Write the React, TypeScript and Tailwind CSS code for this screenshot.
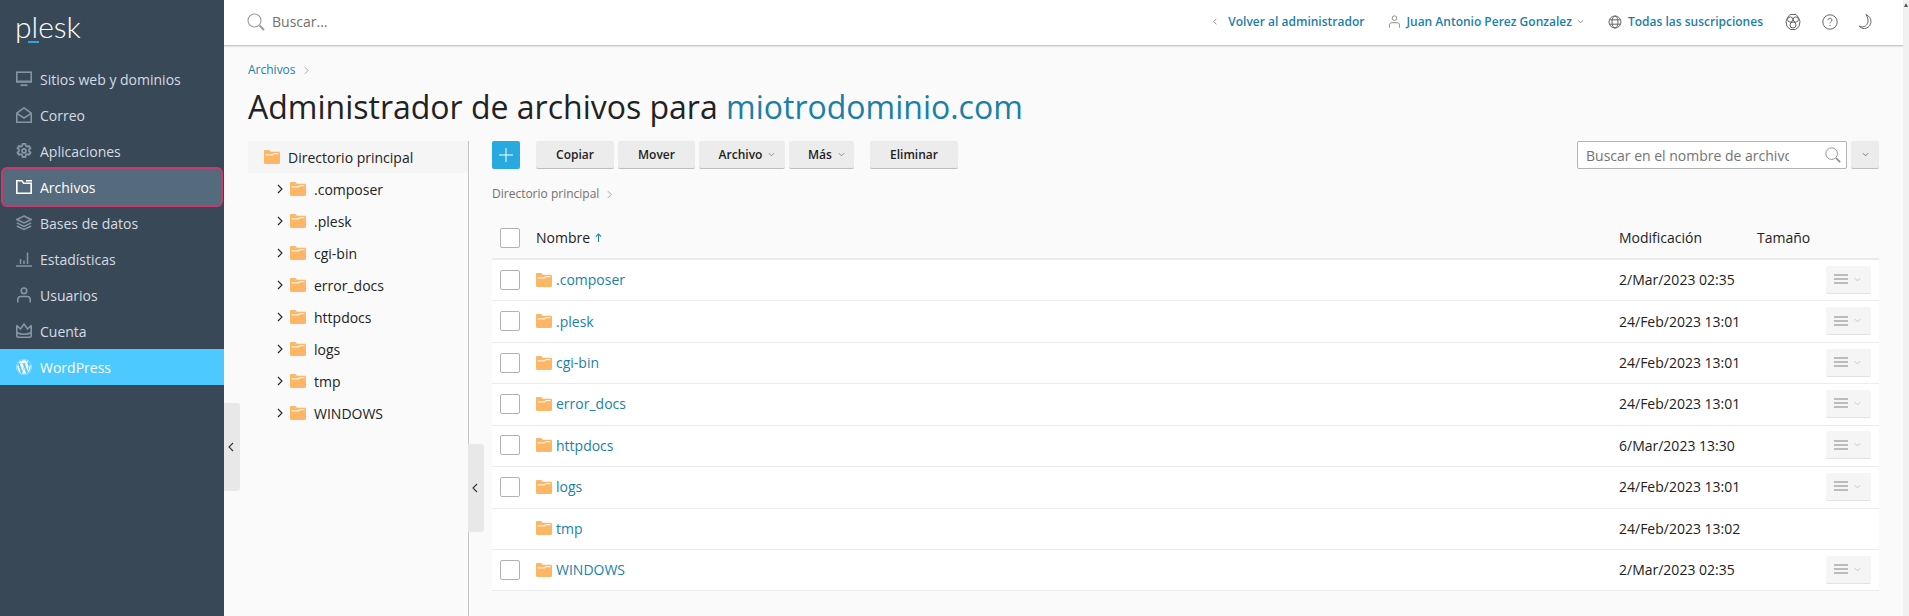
import { FaWordpress } from "react-icons/fa";

const font = "font-['Open_Sans',sans-serif]";

function Folder({ className = "" }: { className?: string }) {
  return (
    <svg viewBox="0 0 16 14" className={`w-4 h-[14px] shrink-0 ${className}`}>
      <path d="M0 1.2C0 .5.5 0 1.2 0h4l1.6 1.8h8C15.500 1.800 16 2.300 16 3v9.800c0 .7-.5 1.200-1.200 1.200H1.200C.5 14 0 13.500 0 12.800z" fill="#fdb566" />
      <path d="M1.500 4.300h7l1-1.200h5v1.200h-4.600l-1 1.200H1.500z" fill="#fff3e2" />
    </svg>
  );
}

const grayIcon = "w-4 h-4 shrink-0";

const MonitorIcon = () => (
  <svg viewBox="0 0 16 16" className={grayIcon} fill="none" stroke="#8795a3" strokeWidth="1.600">
    <rect x=".8" y="1.200" width="14.400" height="9.600" />
    <path d="M0 10.500h16" strokeWidth="2" />
    <path d="M4.500 14.200h7" strokeWidth="1.800" />
  </svg>
);
const MailIcon = () => (
  <svg viewBox="0 0 16 16" className={grayIcon} fill="none" stroke="#8795a3" strokeWidth="1.600">
    <path d="M.8 6.200 8 .9l7.200 5.300v9H.8z" />
    <path d="M.8 6.400 8 11l7.200-4.600" />
  </svg>
);
const GearIcon = () => (
  <svg viewBox="0 0 16 16" className={grayIcon} fill="none" stroke="#8795a3" strokeWidth="1.800">
    <path d="M6.600.8h2.800l.4 2 1.400.8 1.900-.7 1.400 2.400-1.500 1.300v1.600l1.500 1.300-1.400 2.400-1.900-.7-1.400.8-.4 2H6.600l-.4-2-1.400-.8-1.900.7L1.500 9.500 3 8.200V6.600L1.500 5.300l1.400-2.400 1.900.7 1.400-.8z" strokeLinejoin="round" />
    <circle cx="8" cy="7.900" r="2" />
  </svg>
);
const FilesIcon = () => (
  <svg viewBox="0 0 16 14" className="w-4 h-[14px] shrink-0" fill="none" stroke="#fff" strokeWidth="1.600">
    <path d="M.8.800h5l2 2.400h7.400v10H.8z" />
    <path d="M10 .8h6" />
  </svg>
);
const StackIcon = () => (
  <svg viewBox="0 0 16 16" className={grayIcon} fill="none" stroke="#8795a3" strokeWidth="1.500">
    <path d="M8 1 15.200 4.500 8 8 .8 4.500z" />
    <path d="M.8 7.800 8 11.300l7.200-3.500" />
    <path d="M.8 11 8 14.500 15.200 11" />
  </svg>
);
const ChartIcon = () => (
  <svg viewBox="0 0 16 16" className={grayIcon} fill="none" stroke="#8795a3" strokeWidth="1.500">
    <path d="M0 15h16M4.500 13V8M8 13V9.500M11.500 13V1.500" />
  </svg>
);
const UserIcon = ({ className = grayIcon, color = "#8795a3", width = 1.6 }: { className?: string; color?: string; width?: number }) => (
  <svg viewBox="0 0 16 16" className={className} fill="none" stroke={color} strokeWidth={width}>
    <circle cx="8" cy="3.800" r="2.800" />
    <path d="M1.800 15.500v-3c0-2 1.300-3 3-3h6.400c1.700 0 3 1 3 3v3" />
  </svg>
);
const CrownIcon = () => (
  <svg viewBox="0 0 16 16" className={grayIcon} fill="none" stroke="#8795a3" strokeWidth="1.600">
    <path d="M.8 2.500 4.500 6 8 1l3.500 5 3.700-3.500v10c0 1.200-1 1.800-2 1.800H2.800c-1 0-2-.6-2-1.800z" strokeLinejoin="round" />
    <path d="M.8 9.500c2 1.300 4.500 1.800 7.200 1.800s5.200-.5 7.200-1.800" />
  </svg>
);

const navItems = [
  { label: "Sitios web y dominios", icon: <MonitorIcon /> },
  { label: "Correo", icon: <MailIcon /> },
  { label: "Aplicaciones", icon: <GearIcon /> },
  { label: "Archivos", icon: <FilesIcon />, active: true },
  { label: "Bases de datos", icon: <StackIcon /> },
  { label: "Estadísticas", icon: <ChartIcon /> },
  { label: "Usuarios", icon: <UserIcon /> },
  { label: "Cuenta", icon: <CrownIcon /> },
  { label: "WordPress", icon: <FaWordpress className="w-4 h-4 text-white shrink-0" />, wp: true },
];

const treeItems = [".composer", ".plesk", "cgi-bin", "error_docs", "httpdocs", "logs", "tmp", "WINDOWS"];

const rows = [
  { name: ".composer", date: "2/Mar/2023 02:35", actions: true },
  { name: ".plesk", date: "24/Feb/2023 13:01", actions: true },
  { name: "cgi-bin", date: "24/Feb/2023 13:01", actions: true },
  { name: "error_docs", date: "24/Feb/2023 13:01", actions: true },
  { name: "httpdocs", date: "6/Mar/2023 13:30", actions: true },
  { name: "logs", date: "24/Feb/2023 13:01", actions: true },
  { name: "tmp", date: "24/Feb/2023 13:02", actions: false },
  { name: "WINDOWS", date: "2/Mar/2023 02:35", actions: true },
];

function Chevron({ dir = "down", className = "" }: { dir?: "down" | "left" | "right"; className?: string }) {
  const d = dir === "down" ? "M1 1l3 3 3-3" : dir === "left" ? "M5 1 1 5l4 4" : "M1 1l4 4-4 4";
  const box = dir === "down" ? "0 0 8 5" : "0 0 6 10";
  return (
    <svg viewBox={box} className={`shrink-0 ${className}`} fill="none" stroke="currentColor" strokeWidth="1.100">
      <path d={d} />
    </svg>
  );
}

function Checkbox() {
  return <div className="w-5 h-5 bg-white border border-[#b3b3b3] rounded-[2px] shrink-0" />;
}

function ToolButton({ label, width, caret }: { label: string; width: string; caret?: boolean }) {
  return (
    <button className={`${width} ${caret ? "pl-[10px]" : ""} h-7 bg-[#ececec] border-b border-[#bdbdbd] rounded-[2px] text-[12px] font-semibold text-[#222] flex items-center justify-center gap-[6px]`}>
      {label}
      {caret && <Chevron className="text-[#8a8a8a] w-[7px] h-[5px]" />}
    </button>
  );
}

function Handle({ className }: { className: string }) {
  return (
    <div className={`absolute w-4 h-[88px] bg-[#e8e8e8] rounded-r-[3px] flex items-center justify-center pr-[2px] text-[#333] ${className}`}>
      <Chevron dir="left" className="w-[6px] h-[10px]" />
    </div>
  );
}

export default function App() {
  return (
    <div className={`${font} flex h-screen overflow-hidden bg-[#fafafa] text-[#222]`}>
      {/* Sidebar */}
      <aside className="w-[224px] shrink-0 bg-[#394857] flex flex-col">
        <div className="h-[61px] pl-[15px] pt-[8px] relative">
          <span className="font-['Lato',sans-serif] font-light text-[30px] leading-[36px] text-white">plesk</span>
          <div className="absolute left-[28px] top-[41px] w-[11px] h-[2px] bg-[#28aade]" />
        </div>
        <nav className="flex flex-col">
          {navItems.map((item) => (
            <div
              key={item.label}
              className={`h-9 flex items-center gap-[8px] text-[14px] ${
                item.active
                  ? "relative ml-[3px] w-[218px] pl-[13px] bg-[#566a7e] text-white ring-2 ring-[#c63a6c] rounded-[4px]"
                  : item.wp
                    ? "pl-4 bg-[#4cc9ff] text-white"
                    : "pl-4 text-[#d5dce3]"
              }`}
            >
              {item.icon}
              <span>{item.label}</span>
            </div>
          ))}
        </nav>
      </aside>

      {/* Main */}
      <div className="flex-1 min-w-0 flex flex-col relative">
        <header className="h-[46px] shrink-0 pb-[2px] bg-white border-b border-[#c8c8c8] shadow-[0_1px_1px_rgba(0,0,0,0.08)] flex items-center pl-[23px] pr-[30px] text-[12px] font-semibold text-[#1b7fa8]">
          <svg viewBox="0 0 18 18" className="w-[18px] h-[18px] shrink-0" fill="none" stroke="#9a9a9a" strokeWidth="1.100">
            <circle cx="7.500" cy="7.500" r="6.500" />
            <path d="M12.500 12.500 17 17" strokeWidth="1.800" />
          </svg>
          <span className="ml-[7px] text-[14px] font-normal text-[#707070]">Buscar...</span>
          <Chevron dir="left" className="ml-auto text-[#666] w-[4px] h-[7px]" />
          <span className="ml-[11px]">Volver al administrador</span>
          <UserIcon className="ml-[24px] w-[13px] h-[15px] shrink-0" color="#777" width={1} />
          <span className="ml-[5px]">Juan Antonio Perez Gonzalez</span>
          <Chevron className="ml-[5px] text-[#888] w-[7px] h-[5px]" />
          <svg viewBox="0 0 14 14" className="ml-[24px] w-[14px] h-[14px] shrink-0" fill="none" stroke="#666" strokeWidth="1">
            <circle cx="7" cy="7" r="6" />
            <ellipse cx="7" cy="7" rx="3" ry="6" />
            <path d="M1.500 4.800h11M1.500 9.200h11" />
          </svg>
          <span className="ml-[6px]">Todas las suscripciones</span>
          <svg viewBox="0 0 16 18" className="ml-[22px] w-4 h-[18px] shrink-0" fill="none" stroke="#666" strokeWidth="1">
            <path d="M5 1.500h6l2.500 3 1.500 4-1 5-3.500 3h-5l-3.500-3-1-5 1.500-4z" strokeLinejoin="round" />
            <circle cx="5.200" cy="6.500" r="2.600" />
            <circle cx="10.800" cy="6.500" r="2.600" />
            <circle cx="8" cy="12" r="3" />
          </svg>
          <svg viewBox="0 0 16 16" className="ml-[21px] w-4 h-4 shrink-0" fill="none" stroke="#666" strokeWidth="1">
            <circle cx="8" cy="8" r="7.200" />
            <path d="M6 6.200C6 5 6.900 4.300 8 4.300s2 .7 2 1.800c0 1.500-2 1.500-2 3.300M8 11v1" />
          </svg>
          <svg viewBox="0 0 16 16" className="ml-[19px] w-4 h-4 shrink-0" fill="none" stroke="#666" strokeWidth="1">
            <path d="M9 .5c3 1.500 5 3.800 5 7s-3 7-6.500 7c-2 0-4-.8-5.500-2.500 1.500.8 3 1 4.200.8C9.500 12.300 11.500 9 11 6c-.2-2-1-4-2-5.500z" />
          </svg>
        </header>

        <div className="flex-1 min-h-0 flex flex-col pl-6 pr-6">
          <div className="mt-[17px] h-[14px] flex items-center gap-[8px] text-[12px] text-[#1b7fa8]">
            Archivos
            <Chevron dir="right" className="text-[#999] w-[5px] h-[9px]" />
          </div>
          <h1 className="mt-[8px] h-[44px] text-[32px] leading-[44px] font-normal text-[#222] whitespace-nowrap">
            Administrador de archivos para <span className="text-[#1b7fa8]">miotrodominio.com</span>
          </h1>

          <div className="mt-[12px] flex-1 min-h-0 flex">
            {/* Tree */}
            <div className="w-[221px] shrink-0 border-r border-[#c4c4c4] text-[14px]">
              <div className="h-8 bg-[#f5f5f5] flex items-center pl-4 gap-2">
                <Folder />
                Directorio principal
              </div>
              {treeItems.map((name) => (
                <div key={name} className="h-8 flex items-center pl-[29px]">
                  <Chevron dir="right" className="text-[#222] w-[6px] h-[10px]" />
                  <Folder className="ml-[7px]" />
                  <span className="ml-2">{name}</span>
                </div>
              ))}
            </div>

            {/* File list */}
            <div className="flex-1 min-w-0 pl-[23px]">
              <div className="flex items-center h-7">
                <button className="w-7 h-7 bg-[#28aae1] rounded-[2px] flex items-center justify-center">
                  <svg viewBox="0 0 14 14" className="w-[14px] h-[14px]" stroke="#fff" strokeWidth="1">
                    <path d="M7 0v14M0 7h14" />
                  </svg>
                </button>
                <div className="ml-4 flex gap-1">
                  <ToolButton label="Copiar" width="w-[78px]" />
                  <ToolButton label="Mover" width="w-[77px]" />
                  <ToolButton label="Archivo" width="w-[86px]" caret />
                  <ToolButton label="Más" width="w-[65px]" caret />
                </div>
                <div className="ml-4">
                  <ToolButton label="Eliminar" width="w-[88px]" />
                </div>
                <div className="ml-auto w-[270px] h-7 bg-white border border-[#b3b3b3] rounded-[2px] flex items-center pl-[8px] pr-[5px] text-[14px] text-[#737373]">
                  <span className="w-[203px] overflow-hidden whitespace-nowrap">Buscar en el nombre de archivo</span>
                  <svg viewBox="0 0 18 18" className="ml-auto w-4 h-4 shrink-0" fill="none" stroke="#8a8a8a" strokeWidth="1">
                    <circle cx="7.500" cy="7.500" r="6.500" />
                    <path d="M12.500 12.500 17 17" strokeWidth="1.800" />
                  </svg>
                </div>
                <button className="ml-1 w-7 h-7 bg-[#ececec] border-b border-[#bdbdbd] rounded-[2px] flex items-center justify-center text-[#777]">
                  <Chevron className="w-[7px] h-[5px]" />
                </button>
              </div>

              <div className="mt-[17px] h-4 flex items-center gap-[8px] text-[12px] text-[#707070]">
                Directorio principal
                <Chevron dir="right" className="text-[#999] w-[5px] h-[9px]" />
              </div>

              <div className="mt-[15px] h-[43px] border-b-2 border-[#ebebeb] flex items-center text-[14px]">
                <div className="w-[44px] pl-2 shrink-0">
                  <Checkbox />
                </div>
                <span>Nombre</span>
                <svg viewBox="0 0 8 10" className="ml-[5px] w-[7px] h-[9px]" fill="none" stroke="#1b7fa8" strokeWidth="1.200">
                  <path d="M4 10V1M1 4l3-3 3 3" />
                </svg>
                <span className="ml-auto w-[138px]">Modificación</span>
                <span className="w-[122px]">Tamaño</span>
              </div>

              {rows.map((row) => (
                <div key={row.name} className="h-[41.43px] pb-[1px] bg-white border-b border-[#ebebeb] flex items-center text-[14px]">
                  <div className="w-[44px] pl-2 shrink-0">{row.actions && <Checkbox />}</div>
                  <Folder />
                  <span className="ml-1 text-[#1b7fa8]">{row.name}</span>
                  <span className="ml-auto w-[207px]">{row.date}</span>
                  <div className="w-[53px] pr-2 shrink-0">
                    {row.actions && (
                      <div className="w-[45px] h-7 bg-[#f5f5f5] border-b border-[#e2e2e2] rounded-[2px] flex items-center pl-2 gap-[6px]">
                        <div className="w-[14px] flex flex-col gap-[2px]">
                          <div className="h-[2px] bg-[#bcbcbc]" />
                          <div className="h-[2px] bg-[#bcbcbc]" />
                          <div className="h-[2px] bg-[#bcbcbc]" />
                        </div>
                        <Chevron className="text-[#c4c4c4] w-[7px] h-[5px]" />
                      </div>
                    )}
                  </div>
                </div>
              ))}
            </div>
          </div>
        </div>

        <Handle className="left-0 top-[403px]" />
        <Handle className="left-[244px] top-[444px]" />
      </div>

      {/* Scrollbar */}
      <div className="w-[6px] shrink-0 bg-[#f1f1f1] pt-[3px] flex justify-center items-start">
        <svg viewBox="0 0 4 4" className="w-1 h-1">
          <path d="M2 0 4 4H0z" fill="#555" />
        </svg>
      </div>
    </div>
  );
}
